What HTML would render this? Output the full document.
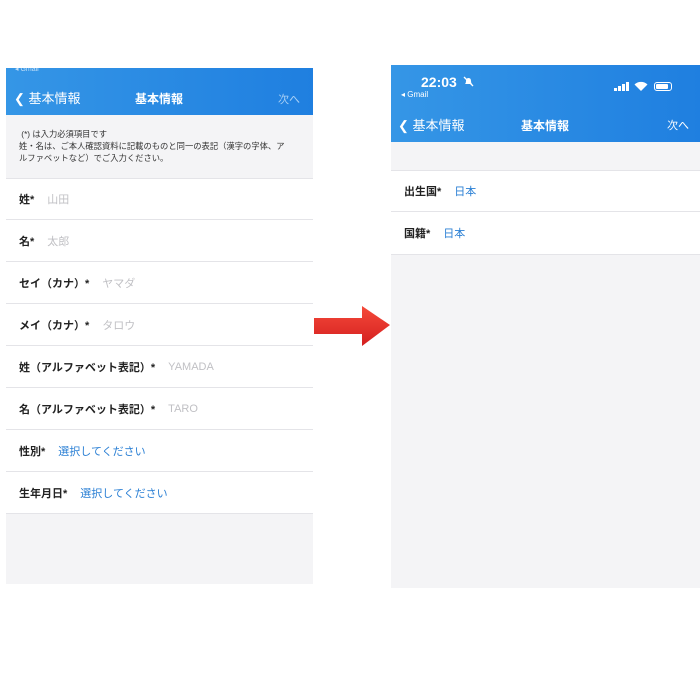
<!DOCTYPE html>
<html><head><meta charset="utf-8"><style>
*{margin:0;padding:0;box-sizing:border-box}
body{width:700px;height:675px;background:#fff;position:relative;overflow:hidden;font-family:"Liberation Sans","Noto Sans CJK JP",sans-serif}
.p{position:absolute;background:#f4f4f6}
.hd{position:absolute;left:0;right:0;background:linear-gradient(90deg,#3596e6,#1f7fe0);color:#fff}
.row{position:absolute;left:0;right:0;height:42px;background:#fff;border-bottom:1px solid #e4e4e8;font-size:11px;display:flex;align-items:center;padding-left:13px}
.row b{color:#222;font-weight:bold;margin-right:13px}
.ph{color:#c0c0c4}
.bl{color:#2a7fd4}
</style></head><body>
<div class="p" style="left:6px;top:68px;width:307px;height:516px">
 <div class="hd" style="top:0;height:47px">
  <div style="position:absolute;left:9px;top:-3px;font-size:7px;opacity:.7">◂ Gmail</div>
  <div style="position:absolute;left:8px;top:20px;font-size:13px">&#10094; 基本情報</div>
  <div style="position:absolute;left:129px;top:22px;font-size:12px;font-weight:bold">基本情報</div>
  <div style="position:absolute;right:13px;top:23px;font-size:11px;color:#a9d0f5">次へ</div>
 </div>
 <div style="position:absolute;left:13px;top:60px;font-size:8.3px;line-height:12px;color:#333">&nbsp;(*) は入力必須項目です<br>姓・名は、ご本人確認資料に記載のものと同一の表記（漢字の字体、ア<br>ルファベットなど）でご入力ください。</div>
 <div class="row" style="top:110px;border-top:1px solid #e4e4e8"><b>姓*</b><span class="ph">山田</span></div>
 <div class="row" style="top:152px"><b>名*</b><span class="ph">太郎</span></div>
 <div class="row" style="top:194px"><b>セイ（カナ）*</b><span class="ph">ヤマダ</span></div>
 <div class="row" style="top:236px"><b>メイ（カナ）*</b><span class="ph">タロウ</span></div>
 <div class="row" style="top:278px"><b>姓（アルファベット表記）*</b><span class="ph">YAMADA</span></div>
 <div class="row" style="top:320px"><b>名（アルファベット表記）*</b><span class="ph">TARO</span></div>
 <div class="row" style="top:362px"><b>性別*</b><span class="bl">選択してください</span></div>
 <div class="row" style="top:404px"><b>生年月日*</b><span class="bl">選択してください</span></div>
</div>
<svg style="position:absolute;left:312px;top:304px" width="80" height="44"><defs><linearGradient id="g" x1="0" y1="0" x2="0" y2="1"><stop offset="0" stop-color="#f54a3a"/><stop offset="1" stop-color="#d41f1f"/></linearGradient></defs><path d="M2 14H50V2L78 21L50 42V30H2Z" fill="url(#g)"/></svg>
<div class="p" style="left:391px;top:65px;width:309px;height:523px">
 <div class="hd" style="top:0;height:77px">
  <div style="position:absolute;left:30px;top:9px;font-size:14px;font-weight:bold">22:03</div>
  <svg style="position:absolute;left:72px;top:11px" width="11" height="11"><path d="M2 8Q3 7 3 5Q3 2 5.5 2Q8 2 8 5Q8 7 9 8Z" fill="#fff"/><path d="M1 1L10 10" stroke="#fff" stroke-width="1.3"/></svg>
  <div style="position:absolute;left:10px;top:25px;font-size:8px">◂ Gmail</div>
  <div style="position:absolute;left:223px;top:17px;width:15px;height:9px;display:flex;align-items:flex-end;gap:1px"><i style="width:3px;height:3px;background:#fff"></i><i style="width:3px;height:5px;background:#fff"></i><i style="width:3px;height:7px;background:#fff"></i><i style="width:3px;height:9px;background:#fff"></i></div>
  <svg style="position:absolute;left:243px;top:16px" width="14" height="11"><path d="M7 10L0.5 3.5A9.5 9.5 0 0 1 13.5 3.5Z" fill="#fff"/></svg>
  <div style="position:absolute;left:263px;top:17px;width:18px;height:9px;border:1px solid #fff;border-radius:3px;padding:1px"><div style="width:12px;height:5px;background:#fff;border-radius:1px"></div></div>
  <div style="position:absolute;left:7px;top:50px;font-size:13px">&#10094; 基本情報</div>
  <div style="position:absolute;left:130px;top:52px;font-size:12px;font-weight:bold">基本情報</div>
  <div style="position:absolute;right:11px;top:52px;font-size:11px">次へ</div>
 </div>
 <div class="row" style="top:105px;border-top:1px solid #e4e4e8"><b>出生国*</b><span class="bl">日本</span></div>
 <div class="row" style="top:147px;height:43px"><b>国籍*</b><span class="bl">日本</span></div>
</div>
</body></html>
